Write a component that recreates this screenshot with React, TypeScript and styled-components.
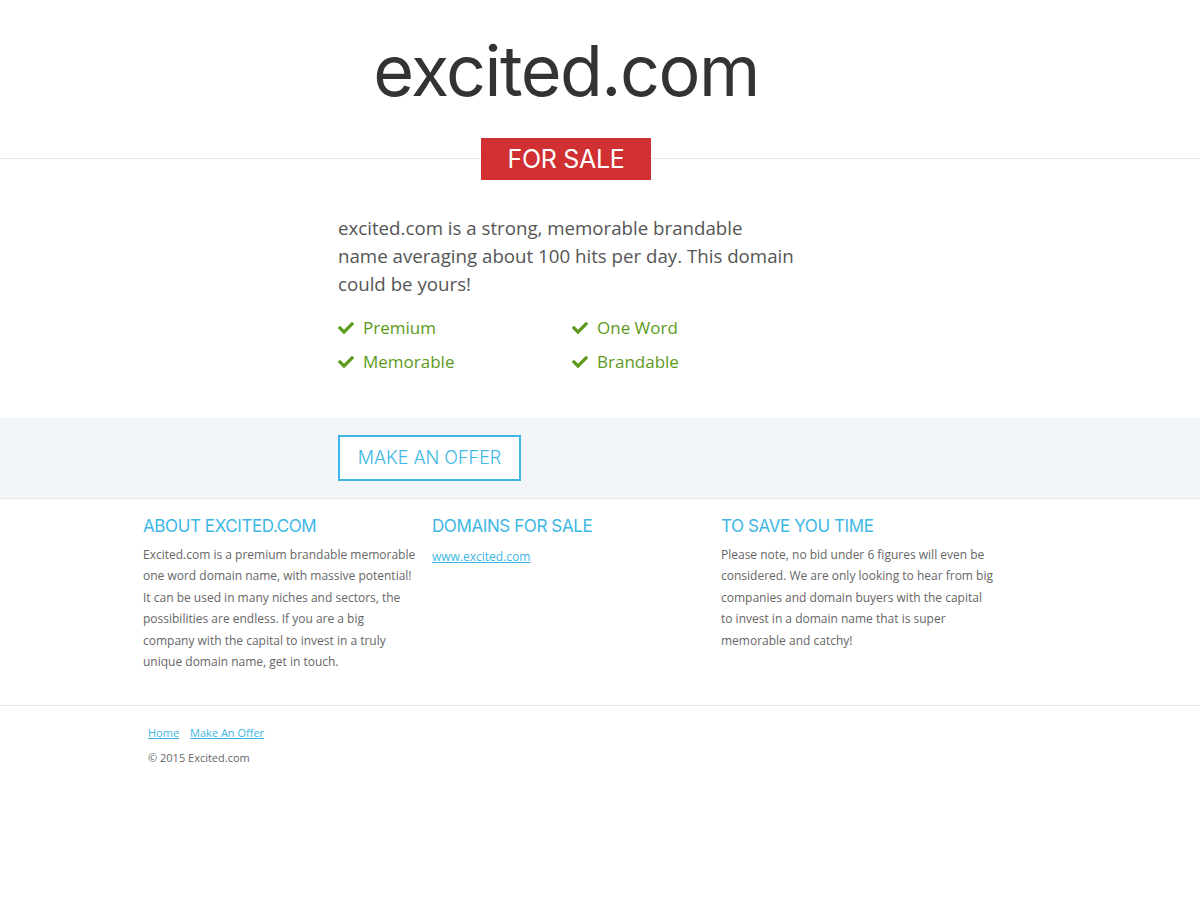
import styled, {createGlobalStyle} from 'styled-components'
import {FaCheck} from 'react-icons/fa'

const GlobalStyle = createGlobalStyle`
    body {
        margin: 0;
        background: #fff;
        font-family: "Open Sans", "Liberation Sans", sans-serif;
        color: #666;
    }
`;

const heading = `"Inter", "Roboto", "Liberation Sans", sans-serif`;

const Header = styled.header`
    border-bottom: 1px solid #e6e6e6;
    height: 158px;
`;
const Column = styled.div`
    width: 456px;
    margin-left: 338px;
`;
const Title = styled.h1`
    margin: 0;
    padding-top: 26px;
    text-align: center;
    font-family: ${heading};
    font-weight: 400;
    font-size: 70px;
    letter-spacing: -1.5px;
    line-height: 90px;
    color: #333;
`;
const BadgeRow = styled.div`
    display: flex;
    justify-content: center;
    margin-top: -21px;
`;
const Badge = styled.span`
    display: inline-block;
    background: #d03032;
    color: #fff;
    font-family: ${heading};
    font-size: 25px;
    line-height: 42px;
    width: 170px;
    text-align: center;
    letter-spacing: -0.3px;
`;
const Intro = styled.section`
    padding: 34px 0 44px;
`;
const Lead = styled.p`
    margin: 0;
    font-size: 18.7px;
    line-height: 28px;
    color: #555;
`;
const Features = styled.ul`
    list-style: none;
    margin: 18px 0 0;
    padding: 0;
    display: grid;
    grid-template-columns: 234px 234px;
    row-gap: 10px;
`;
const Feature = styled.li`
    display: flex;
    align-items: center;
    gap: 9px;
    font-size: 17px;
    line-height: 24px;
    color: #5c9a1a;
    svg {
        width: 16px;
        height: 16px;
    }
`;
const OfferBand = styled.section`
    background: #f2f6f9;
    border-bottom: 1px solid #e6e6e6;
    padding: 17px 0;
`;
const OfferButton = styled.a`
    display: inline-block;
    box-sizing: border-box;
    height: 46px;
    width: 183px;
    border: 2px solid #3db7e4;
    background: #fff;
    color: #3db7e4;
    font-family: ${heading};
    font-weight: 300;
    font-size: 18px;
    line-height: 42px;
    text-align: center;
    text-decoration: none;
    cursor: pointer;
`;
const Info = styled.section`
    display: grid;
    grid-template-columns: repeat(3, 289px);
    padding: 15px 0 33px 143px;
    border-bottom: 1px solid #e6e6e6;
`;
const InfoBlock = styled.div`
    width: 275px;
`;
const InfoTitle = styled.h3`
    margin: 0 0 6px;
    font-family: ${heading};
    font-weight: 400;
    font-size: 17px;
    line-height: 24px;
    letter-spacing: -0.4px;
    color: #3db7e4;
    text-transform: uppercase;
`;
const InfoText = styled.p`
    margin: 0;
    font-size: 12px;
    line-height: 21.4px;
    color: #666;
`;
const InfoLink = styled.a`
    font-size: 12px;
    line-height: 21px;
    color: #3db7e4;
    text-decoration: underline;
`;
const Footer = styled.footer`
    padding: 18px 0 0 148px;
`;
const FooterNav = styled.nav`
    display: flex;
    gap: 11px;
`;
const FooterLink = styled.a`
    font-size: 11px;
    line-height: 18px;
    color: #3db7e4;
    text-decoration: underline;
`;
const Copy = styled.p`
    margin: 7px 0 0;
    font-size: 11px;
    line-height: 18px;
    color: #666;
`;

const features = ['Premium', 'One Word', 'Memorable', 'Brandable'];

function App() {
    return (
        <>
            <GlobalStyle/>
            <Header>
                <Column>
                    <Title>excited.com</Title>
                </Column>
            </Header>
            <Column>
                <BadgeRow>
                    <Badge>FOR SALE</Badge>
                </BadgeRow>
                <Intro>
                    <Lead>excited.com is a strong, memorable brandable name averaging about 100 hits per day. This domain could be yours!</Lead>
                    <Features>
                        {features.map(f => <Feature key={f}><FaCheck/>{f}</Feature>)}
                    </Features>
                </Intro>
            </Column>
            <OfferBand>
                <Column>
                    <OfferButton>MAKE AN OFFER</OfferButton>
                </Column>
            </OfferBand>
            <Info>
                <InfoBlock>
                    <InfoTitle>About Excited.com</InfoTitle>
                    <InfoText>Excited.com is a premium brandable memorable one word domain name, with massive potential! It can be used in many niches and sectors, the possibilities are endless. If you are a big company with the capital to invest in a truly unique domain name, get in touch.</InfoText>
                </InfoBlock>
                <InfoBlock>
                    <InfoTitle>Domains For Sale</InfoTitle>
                    <InfoLink href="#">www.excited.com</InfoLink>
                </InfoBlock>
                <InfoBlock>
                    <InfoTitle>To Save You Time</InfoTitle>
                    <InfoText>Please note, no bid under 6 figures will even be considered. We are only looking to hear from big companies and domain buyers with the capital to invest in a domain name that is super memorable and catchy!</InfoText>
                </InfoBlock>
            </Info>
            <Footer>
                <FooterNav>
                    <FooterLink href="#">Home</FooterLink>
                    <FooterLink href="#">Make An Offer</FooterLink>
                </FooterNav>
                <Copy>© 2015 Excited.com</Copy>
            </Footer>
        </>
    )
}

export default App
